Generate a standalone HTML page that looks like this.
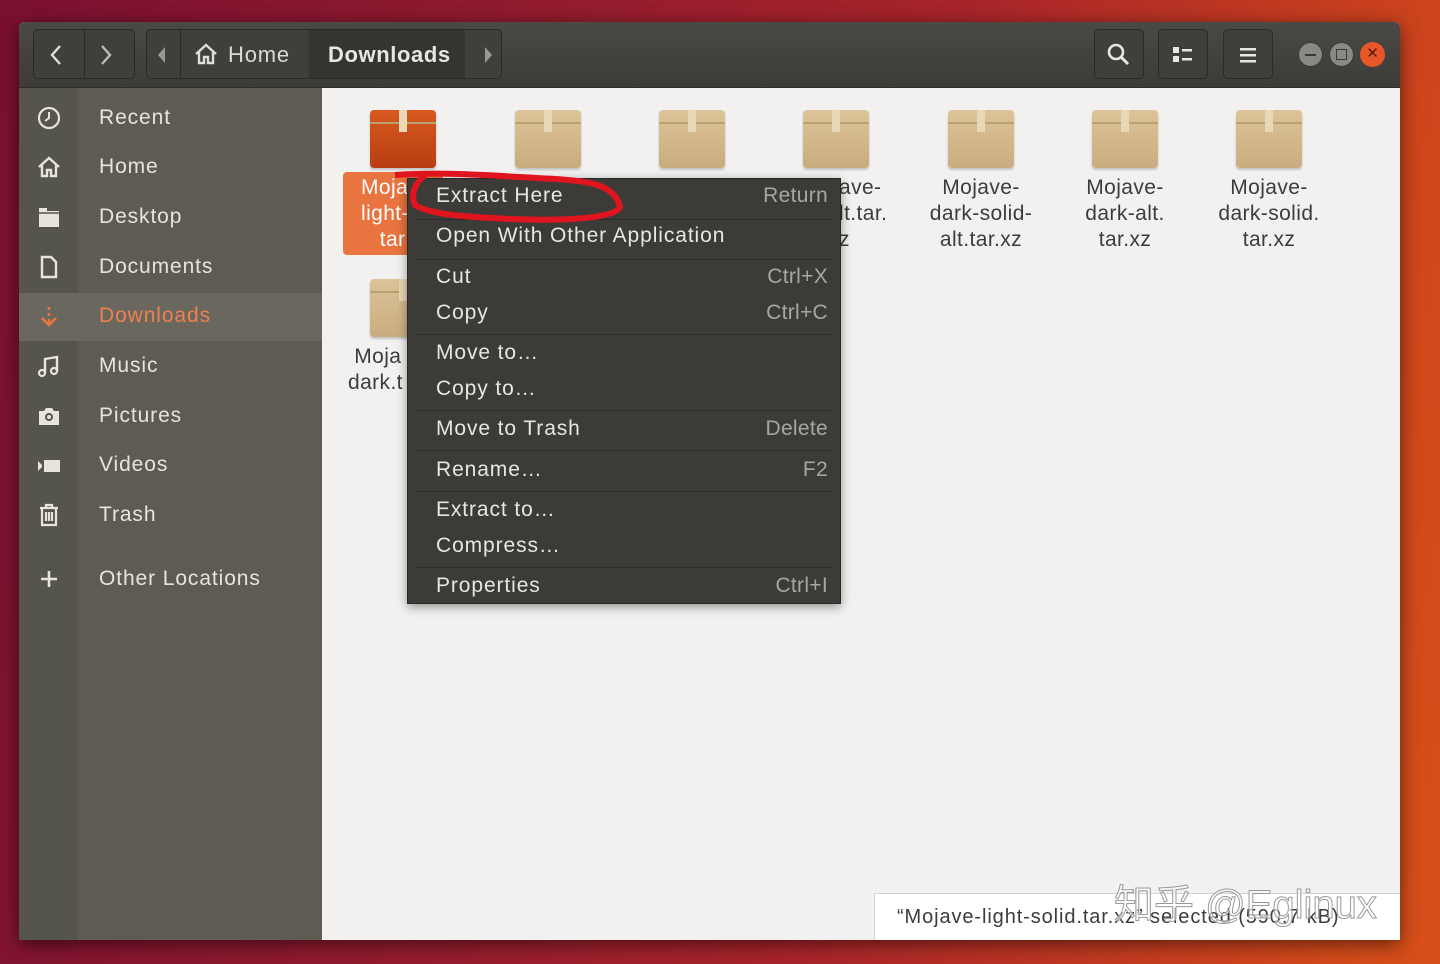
<!DOCTYPE html>
<html><head><meta charset="utf-8"><style>
*{margin:0;padding:0;box-sizing:border-box}
body{width:1440px;height:964px;overflow:hidden;position:relative;font-family:"Liberation Sans","DejaVu Sans",sans-serif;
background:linear-gradient(100deg,#7a1030 0%,#8e1a2e 30%,#a8242a 60%,#c8401e 85%,#d85018 100%);}
.win{position:absolute;left:19px;top:22px;width:1381px;height:918px;background:#f2f1f0;box-shadow:0 4px 18px rgba(0,0,0,.55);border-radius:6px 6px 0 0;overflow:hidden}
.hdr{position:absolute;left:0;top:0;width:100%;height:66px;background:linear-gradient(#4a4944,#3d3c38);border-bottom:1px solid #2e2d2a}
.btn{position:absolute;top:7px;height:50px;border:1px solid #2b2a27;background:#403f3b;border-radius:5px;color:#e0ded8}
.side1{position:absolute;left:0;top:66px;width:59px;height:852px;background:#55544d}
.side2{position:absolute;left:59px;top:66px;width:244px;height:852px;background:#5e5c52}
.sel{position:absolute;left:0;top:271px;width:303px;height:48px;background:#6a685e}
.si{position:absolute;left:80px;color:#e6e4dc;font-size:21px;letter-spacing:0.9px}
.ic{position:absolute;left:18px;width:24px;height:24px}
.file{position:absolute;width:130px;text-align:center;color:#3c3c3c;font-size:21px;line-height:26px;letter-spacing:0.4px}
.box{position:absolute;width:66px;height:58px;border-radius:4px;background:linear-gradient(#dcc398,#c9ad80);box-shadow:0 2px 2px rgba(0,0,0,.2)}
.box:before{content:"";position:absolute;left:0;right:0;top:12px;height:2px;background:#bba072}
.box:after{content:"";position:absolute;left:29px;top:0;width:8px;height:22px;background:#e8d8b8}
.menu{position:absolute;left:407px;top:178px;width:434px;height:426px;background:#3c3b37;border:1px solid #2a2926;box-shadow:0 3px 10px rgba(0,0,0,.4)}
.mi{position:absolute;left:28px;right:12px;color:#e8e6e0;font-size:21px;letter-spacing:0.9px}
.mi span{float:right;color:#a8a6a0;letter-spacing:0.3px}
.sep{position:absolute;left:8px;right:8px;height:1px;background:#2d2c29}
</style></head><body>
<div class="win">
 <div class="hdr">
  <div class="btn" style="left:14px;width:102px"></div>
  <div style="position:absolute;left:65px;top:8px;width:1px;height:48px;background:#2b2a27"></div>
  <svg style="position:absolute;left:30px;top:22px" width="14" height="22"><path d="M11 2L3 11l8 9" stroke="#e0ded8" stroke-width="2.4" fill="none"/></svg>
  <svg style="position:absolute;left:80px;top:22px" width="14" height="22"><path d="M3 2l8 9-8 9" stroke="#bdbbb5" stroke-width="2.4" fill="none"/></svg>
  <div class="btn" style="left:127px;width:356px"></div>
  <svg style="position:absolute;left:138px;top:24px" width="10" height="18"><path d="M8 1L1 9l7 8z" fill="#9a9892"/></svg>
  <div style="position:absolute;left:161px;top:8px;width:1px;height:48px;background:#2b2a27"></div>
  <div style="position:absolute;left:290px;top:8px;width:156px;height:48px;background:#35342f"></div>
  <svg style="position:absolute;left:174px;top:20px" width="26" height="24"><path d="M3 12L13 3l10 9M6 10v11h5v-6h4v6h5V10" stroke="#e0ded8" stroke-width="2.4" fill="none"/></svg>
  <div style="position:absolute;left:209px;top:20px;font-size:22px;color:#dcdad4;letter-spacing:0.8px">Home</div>
  <div style="position:absolute;left:309px;top:20px;font-size:22px;font-weight:bold;color:#e8e6e0;letter-spacing:0.6px">Downloads</div>
  <svg style="position:absolute;left:464px;top:24px" width="10" height="18"><path d="M2 1l7 8-7 8z" fill="#9a9892"/></svg>
  <div class="btn" style="left:1075px;width:50px"></div>
  <svg style="position:absolute;left:1087px;top:20px" width="26" height="26"><circle cx="10" cy="10" r="7" stroke="#e8e6e0" stroke-width="2.6" fill="none"/><path d="M15 15l7 7" stroke="#e8e6e0" stroke-width="3"/></svg>
  <div class="btn" style="left:1139px;width:50px"></div>
  <svg style="position:absolute;left:1153px;top:23px" width="24" height="20"><rect x="1" y="2" width="6" height="6" fill="#e8e6e0"/><rect x="1" y="11" width="6" height="6" fill="#e8e6e0"/><rect x="10" y="4" width="10" height="2.5" fill="#e8e6e0"/><rect x="10" y="13" width="10" height="2.5" fill="#e8e6e0"/></svg>
  <div class="btn" style="left:1204px;width:50px"></div>
  <svg style="position:absolute;left:1220px;top:23px" width="20" height="20"><rect x="1" y="3" width="16" height="2.5" fill="#e8e6e0"/><rect x="1" y="9" width="16" height="2.5" fill="#e8e6e0"/><rect x="1" y="15" width="16" height="2.5" fill="#e8e6e0"/></svg>
  <div style="position:absolute;left:1279px;top:20px;width:25px;height:25px;border-radius:50%;background:#8a8882;border:1px solid #3a3935"><div style="margin:11px 6px;height:2px;background:#3a3935"></div></div>
  <div style="position:absolute;left:1310px;top:20px;width:25px;height:25px;border-radius:50%;background:#8a8882;border:1px solid #3a3935"><div style="margin:6px;width:11px;height:11px;border:1.5px solid #3a3935"></div></div>
  <div style="position:absolute;left:1341px;top:20px;width:25px;height:25px;border-radius:50%;background:#e8572a;color:#5a1a08;font-size:15px;text-align:center;line-height:24px">✕</div>
 </div>
 <div class="side1"></div><div class="side2"></div>
 <div class="sel"></div>
 <svg class="ic" style="top:84px" viewBox="0 0 24 24"><circle cx="12" cy="12" r="10" stroke="#e6e4dc" stroke-width="2.2" fill="none"/><path d="M12 6v6l-4 3" stroke="#e6e4dc" stroke-width="2" fill="none"/></svg>
 <div class="si" style="top:84px">Recent</div>
 <svg class="ic" style="top:133px" viewBox="0 0 24 24"><path d="M2 12L12 3l10 9M5 10v11h5v-6h4v6h5V10" stroke="#e6e4dc" stroke-width="2.4" fill="none"/></svg>
 <div class="si" style="top:133px">Home</div>
 <svg class="ic" style="top:183px" viewBox="0 0 24 24"><path d="M2 3h8v3h12v16H2z" fill="#e6e4dc"/><path d="M2 8h20" stroke="#55544d" stroke-width="1.5"/></svg>
 <div class="si" style="top:183px">Desktop</div>
 <svg class="ic" style="top:233px" viewBox="0 0 24 24"><path d="M5 2h9l5 5v15H5z" stroke="#e6e4dc" stroke-width="2.4" fill="none"/></svg>
 <div class="si" style="top:233px">Documents</div>
 <svg class="ic" style="top:283px" viewBox="0 0 24 24"><path d="M12 2v3M12 8v3M12 14v5M5 13l7 7 7-7" stroke="#e8743e" stroke-width="2.6" fill="none"/></svg>
 <div class="si" style="top:282px;color:#ef8050">Downloads</div>
 <svg class="ic" style="top:333px" viewBox="0 0 24 24"><path d="M8 18V4l12-2v14" stroke="#e6e4dc" stroke-width="2.4" fill="none"/><circle cx="5" cy="18" r="3" stroke="#e6e4dc" stroke-width="2.2" fill="none"/><circle cx="17" cy="16" r="3" stroke="#e6e4dc" stroke-width="2.2" fill="none"/></svg>
 <div class="si" style="top:332px">Music</div>
 <svg class="ic" style="top:382px" viewBox="0 0 24 24"><path d="M2 7h5l2-3h6l2 3h5v14H2z" fill="#e6e4dc"/><circle cx="12" cy="13" r="4" fill="#55544d"/><circle cx="12" cy="13" r="2" fill="#e6e4dc"/></svg>
 <div class="si" style="top:382px">Pictures</div>
 <svg class="ic" style="top:432px" viewBox="0 0 24 24"><path d="M1 7l4 4v2l-4 4z" fill="#e6e4dc"/><rect x="7" y="6" width="16" height="12" fill="#e6e4dc"/></svg>
 <div class="si" style="top:431px">Videos</div>
 <svg class="ic" style="top:481px" viewBox="0 0 24 24"><path d="M3 5h18M9 5V2h6v3M5 5v17h14V5M9 9v9M12 9v9M15 9v9" stroke="#e6e4dc" stroke-width="2.2" fill="none"/></svg>
 <div class="si" style="top:481px">Trash</div>
 <svg class="ic" style="top:545px" viewBox="0 0 24 24"><path d="M12 4v16M4 12h16" stroke="#e6e4dc" stroke-width="2.6"/></svg>
 <div class="si" style="top:545px">Other Locations</div>

 <div class="box" style="left:351px;top:88px;background:linear-gradient(#d85a20,#b83e12)"></div>
 <div style="position:absolute;left:324px;top:150px;width:100px;height:83px;background:#e9743f;border-radius:4px"></div>
 <div class="file" style="left:324px;top:153px;width:110px;color:#fff;text-align:left;padding-left:18px">Moja<br>light-s<br>&nbsp;&nbsp;&nbsp;tar</div>
 <div class="box" style="left:496px;top:88px"></div>
 <div class="box" style="left:640px;top:88px"></div>
 <div class="box" style="left:784px;top:88px"></div>
 <div class="file" style="left:820px;top:153px;width:100px;text-align:left">ave-<br>lt.tar.<br>z</div>
 <div class="box" style="left:929px;top:88px"></div>
 <div class="file" style="left:897px;top:153px">Mojave-<br>dark-solid-<br>alt.tar.xz</div>
 <div class="box" style="left:1073px;top:88px"></div>
 <div class="file" style="left:1041px;top:153px">Mojave-<br>dark-alt.<br>tar.xz</div>
 <div class="box" style="left:1217px;top:88px"></div>
 <div class="file" style="left:1185px;top:153px">Mojave-<br>dark-solid.<br>tar.xz</div>
 <div class="box" style="left:351px;top:257px"></div>
 <div class="file" style="left:329px;top:322px;width:110px;text-align:left">&nbsp;Moja<br>dark.t</div>

 <div style="position:absolute;left:855px;top:871px;width:530px;height:50px;background:#fff;border:1px solid #d6d4d0;color:#3c3c3c;font-size:20px;padding:12px 0 0 22px;letter-spacing:0.9px;white-space:nowrap">“Mojave-light-solid.tar.xz” selected (590.7 kB)</div>
 <div style="position:absolute;left:1095px;top:850px;font-size:40px;color:rgba(255,255,255,.6);font-family:'Liberation Sans','Noto Sans CJK SC',sans-serif;-webkit-text-stroke:1px #999">知乎 @Eglinux</div>
</div>

<div class="menu">
 <div class="mi" style="top:5px">Extract Here<span>Return</span></div>
 <div class="sep" style="top:40px"></div>
 <div class="mi" style="top:45px">Open With Other Application</div>
 <div class="sep" style="top:80px"></div>
 <div class="mi" style="top:86px">Cut<span>Ctrl+X</span></div>
 <div class="mi" style="top:122px">Copy<span>Ctrl+C</span></div>
 <div class="sep" style="top:155px"></div>
 <div class="mi" style="top:162px">Move to…</div>
 <div class="mi" style="top:198px">Copy to…</div>
 <div class="sep" style="top:231px"></div>
 <div class="mi" style="top:238px">Move to Trash<span>Delete</span></div>
 <div class="sep" style="top:271px"></div>
 <div class="mi" style="top:279px">Rename…<span>F2</span></div>
 <div class="sep" style="top:312px"></div>
 <div class="mi" style="top:319px">Extract to…</div>
 <div class="mi" style="top:355px">Compress…</div>
 <div class="sep" style="top:388px"></div>
 <div class="mi" style="top:395px">Properties<span>Ctrl+I</span></div>
</div>
<svg style="position:absolute;left:390px;top:165px" width="250" height="65"><path d="M5 10C60 6 120 12 165 14c35 2 60 6 65 28-5 12-60 14-110 12-40 -2-80 -4-95-14C20 30 25 18 35 10" stroke="#e0141e" stroke-width="6" fill="none"/></svg>
</body></html>
